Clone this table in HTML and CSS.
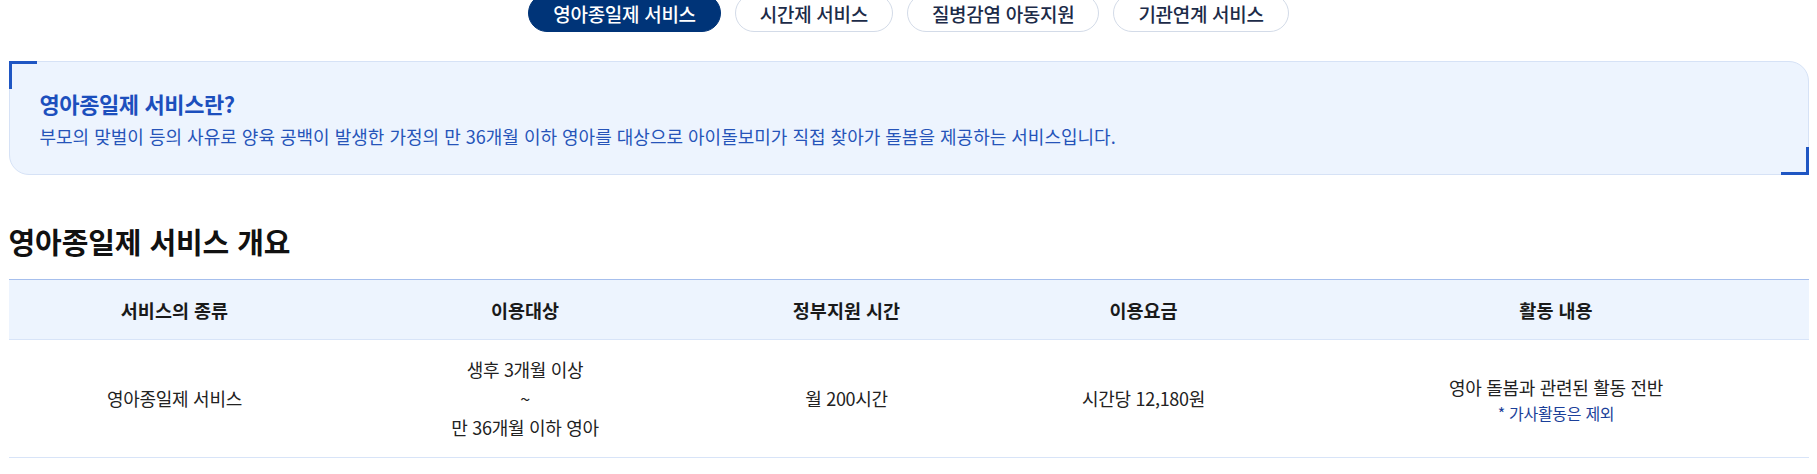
FILE: index.html
```html
<!DOCTYPE html>
<html lang="ko">
<head>
<meta charset="utf-8">
<title>영아종일제 서비스</title>
<link rel="stylesheet" href="styles.css">
</head>
<body>
<nav class="tabs">
  <a class="tab tab-active">영아종일제 서비스</a>
  <a class="tab">시간제 서비스</a>
  <a class="tab">질병감염 아동지원</a>
  <a class="tab">기관연계 서비스</a>
</nav>
<main class="container">
  <section class="info">
    <h3 class="info-title">영아종일제 서비스란?</h3>
    <p class="info-desc">부모의 맞벌이 등의 사유로 양육 공백이 발생한 가정의 만 36개월 이하 영아를 대상으로 아이돌보미가 직접 찾아가 돌봄을 제공하는 서비스입니다.</p>
  </section>
  <h2 class="section-title">영아종일제 서비스 개요</h2>
  <table class="overview">
    <colgroup>
      <col class="c1"><col class="c2"><col class="c3"><col class="c4"><col class="c5">
    </colgroup>
    <thead>
      <tr>
        <th>서비스의 종류</th>
        <th>이용대상</th>
        <th>정부지원 시간</th>
        <th>이용요금</th>
        <th>활동 내용</th>
      </tr>
    </thead>
    <tbody>
      <tr>
        <td>영아종일제 서비스</td>
        <td class="multi">생후 3개월 이상<br>~<br>만 36개월 이하 영아</td>
        <td>월 200시간</td>
        <td>시간당 12,180원</td>
        <td class="activity">영아 돌봄과 관련된 활동 전반<span class="note">* 가사활동은 제외</span></td>
      </tr>
    </tbody>
  </table>
</main>
</body>
</html>
```
FILE: styles.css
```css
* { box-sizing: border-box; }
body {
  margin: 0;
  background: #fff;
  font-family: "Noto Sans CJK KR", "Noto Sans", sans-serif;
  color: #222;
}
.tabs {
  display: flex;
  justify-content: center;
  gap: 14px;
  margin-top: -6px;
}
.tab {
  display: flex;
  align-items: center;
  height: 38px;
  padding: 0 24px;
  border: 1px solid #d3dbe8;
  border-radius: 19px;
  font-size: 19px;
  font-weight: 500;
  letter-spacing: -0.3px;
  color: #1c2b48;
  background: #fff;
}
.tab-active {
  background: #003478;
  border-color: #003478;
  color: #fff;
}
.container {
  width: 1800px;
  margin: 0 auto;
}
.info {
  position: relative;
  margin-top: 29px;
  height: 114px;
  padding: 26px 30px 0;
  background: #edf4fe;
  border: 1px solid #d6e2f6;
  border-radius: 0 20px 0 20px;
}
.info::before,
.info::after {
  content: "";
  position: absolute;
  width: 25px;
  height: 25px;
  border-color: #1f56c3;
  border-style: solid;
  border-width: 0;
}
.info::before {
  top: -1px;
  left: -1px;
  border-top-width: 3px;
  border-left-width: 3px;
}
.info::after {
  bottom: -1px;
  right: -1px;
  border-bottom-width: 3px;
  border-right-width: 3px;
}
.info-title {
  margin: 0;
  font-size: 22px;
  line-height: 30px;
  font-weight: 700;
  letter-spacing: -0.4px;
  color: #1c4fbd;
}
.info-desc {
  margin: 5px 0 0;
  font-size: 18px;
  line-height: 27px;
  letter-spacing: 0;
  color: #2654b9;
}
.section-title {
  margin: 47px 0 0;
  font-size: 29px;
  line-height: 38px;
  font-weight: 700;
  letter-spacing: -0.1px;
  color: #111;
}
.overview {
  margin-top: 19px;
  width: 100%;
  border-collapse: collapse;
  table-layout: fixed;
  border-top: 1px solid #a6bfed;
}
.c1 { width: 332px; }
.c2 { width: 369px; }
.c3 { width: 274px; }
.c4 { width: 320px; }
.c5 { width: 505px; }
.overview th {
  height: 60px;
  background: #edf4fe;
  font-size: 18.5px;
  font-weight: 700;
  letter-spacing: 0;
  color: #1a1a1a;
  border-bottom: 1px solid #d8e4f8;
  text-align: center;
}
.overview td {
  height: 118px;
  font-size: 18px;
  line-height: 29px;
  letter-spacing: -0.3px;
  color: #222;
  text-align: center;
  border-bottom: 1px solid #d8e4f8;
}
.activity {
  line-height: 26px;
}
.note {
  display: block;
  font-size: 16px;
  line-height: 22px;
  color: #1b3f99;
}
```
